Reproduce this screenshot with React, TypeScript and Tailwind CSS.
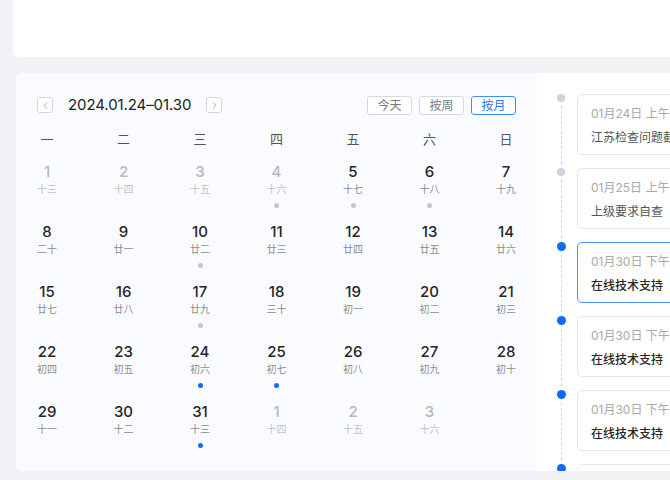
import { ChevronLeft, ChevronRight } from "lucide-react";

type Day = { d: number; l: string; muted?: boolean; dot?: "gray" | "blue" } | null;

const rows: Day[][] = [
  [
    { d: 1, l: "十三", muted: true },
    { d: 2, l: "十四", muted: true },
    { d: 3, l: "十五", muted: true },
    { d: 4, l: "十六", muted: true, dot: "gray" },
    { d: 5, l: "十七", dot: "gray" },
    { d: 6, l: "十八", dot: "gray" },
    { d: 7, l: "十九" },
  ],
  [
    { d: 8, l: "二十" },
    { d: 9, l: "廿一" },
    { d: 10, l: "廿二", dot: "gray" },
    { d: 11, l: "廿三" },
    { d: 12, l: "廿四" },
    { d: 13, l: "廿五" },
    { d: 14, l: "廿六" },
  ],
  [
    { d: 15, l: "廿七" },
    { d: 16, l: "廿八" },
    { d: 17, l: "廿九", dot: "gray" },
    { d: 18, l: "三十" },
    { d: 19, l: "初一" },
    { d: 20, l: "初二" },
    { d: 21, l: "初三" },
  ],
  [
    { d: 22, l: "初四" },
    { d: 23, l: "初五" },
    { d: 24, l: "初六", dot: "blue" },
    { d: 25, l: "初七", dot: "blue" },
    { d: 26, l: "初八" },
    { d: 27, l: "初九" },
    { d: 28, l: "初十" },
  ],
  [
    { d: 29, l: "十一" },
    { d: 30, l: "十二" },
    { d: 31, l: "十三", dot: "blue" },
    { d: 1, l: "十四", muted: true },
    { d: 2, l: "十五", muted: true },
    { d: 3, l: "十六", muted: true },
    null,
  ],
];

const weekdays = ["一", "二", "三", "四", "五", "六", "日"];

// the panel runs past the right edge, only the start of each line shows
const events = [
  { time: "01月24日 上午", title: "江苏检查问题截", past: true },
  { time: "01月25日 上午", title: "上级要求自查", past: true },
  { time: "01月30日 下午", title: "在线技术支持", active: true },
  { time: "01月30日 下午", title: "在线技术支持" },
  { time: "01月30日 下午", title: "在线技术支持" },
  { time: "", title: "" },
];

function DayCell({ day }: { day: Day }) {
  if (!day) return <div className="w-[30px]" />;
  return (
    <div className="w-[30px] flex flex-col items-center">
      <span
        className={`text-[15px] leading-[20px] font-medium ${day.muted ? "text-[#b8b8b8]" : "text-[#262626]"}`}
      >
        {day.d}
      </span>
      <span className={`text-[10px] leading-[14px] whitespace-nowrap ${day.muted ? "text-[#c2c2c2]" : "text-[#8c8c8c]"}`}>
        {day.l}
      </span>
      {day.dot && (
        <span
          className={`mt-[7px] w-[5px] h-[5px] rounded-full ${day.dot === "blue" ? "bg-[#0d6efd]" : "bg-[#c4c6cc]"}`}
        />
      )}
    </div>
  );
}

export default function App() {
  return (
    <div
      className="w-[670px] h-[480px] overflow-hidden bg-[#f1f2f6] pl-[13px]"
      style={{ fontFamily: '"Inter", "Noto Sans CJK SC", sans-serif' }}
    >
      <div className="w-[700px] h-[57px] bg-white rounded-bl-md" />

      <div className="w-[700px] h-[398px] mt-[16px] ml-[3px] flex bg-white rounded-md overflow-hidden">
        {/* calendar */}
        <section className="w-[521px] shrink-0 h-full bg-[#fafbfe] px-[16px] pt-[22px]">
          <div className="h-[20px] px-[5px] flex items-center">
            <button className="w-[16px] h-[16px] flex items-center justify-center border border-[#d6d6d6] rounded-[3px] bg-white text-[#888]">
              <ChevronLeft size={11} strokeWidth={1.6} />
            </button>
            <span className="ml-[15px] text-[15px] leading-[20px] text-[#222] tracking-[-0.1px]">2024.01.24–01.30</span>
            <button className="ml-[15px] w-[16px] h-[16px] flex items-center justify-center border border-[#d6d6d6] rounded-[3px] bg-white text-[#888]">
              <ChevronRight size={11} strokeWidth={1.6} />
            </button>
            <div className="ml-auto flex gap-[7px]">
              <button className="w-[45px] h-[19px] border border-[#d9d9d9] rounded-[3px] bg-white text-[12px] leading-[17px] text-[#777]">
                今天
              </button>
              <button className="w-[45px] h-[19px] border border-[#d9d9d9] rounded-[3px] bg-white text-[12px] leading-[17px] text-[#777]">
                按周
              </button>
              <button className="w-[45px] h-[19px] border border-[#3f8cf7] rounded-[3px] bg-white text-[12px] leading-[17px] text-[#1f77f2]">
                按月
              </button>
            </div>
          </div>

          <div className="mt-[14px] h-[20px] flex justify-between">
            {weekdays.map((w) => (
              <div key={w} className="w-[30px] text-center text-[13px] leading-[20px] text-[#555]">
                {w}
              </div>
            ))}
          </div>

          <div className="mt-[13px] flex flex-col">
            {rows.map((r, i) => (
              <div key={i} className="h-[60px] flex justify-between">
                {r.map((day, j) => (
                  <DayCell key={j} day={day} />
                ))}
              </div>
            ))}
          </div>
        </section>

        {/* timeline */}
        <section className="flex-1 pt-[21px] pl-[16px]">
          {events.map((e, i) => (
            <div key={i} className="h-[74px] flex">
              <div className="w-[16px] flex flex-col items-center">
                <span
                  className={`shrink-0 rounded-full ${
                    e.past ? "w-[8px] h-[8px] bg-[#cfd1e0]" : "w-[9px] h-[9px] bg-[#0a6cf7]"
                  }`}
                />
                <span className="flex-1 mt-[4px] mb-[4px] border-l border-dashed border-[#d3d6de]" />
              </div>
              <div
                className={`ml-[8px] w-[200px] h-[61px] rounded-[5px] border pl-[13px] pt-[10px] whitespace-nowrap ${
                  e.active ? "border-[#4d94f5]" : "border-[#e4e6ec]"
                } bg-white`}
              >
                {e.time && <div className="text-[12px] leading-[17px] text-[#a8a8a8]">{e.time}</div>}
                {e.title && (
                  <div
                    className={`mt-[7px] text-[12px] leading-[17px] ${
                      e.past ? "text-[#555]" : "text-[#262626] font-medium"
                    }`}
                  >
                    {e.title}
                  </div>
                )}
              </div>
            </div>
          ))}
        </section>
      </div>
    </div>
  );
}
